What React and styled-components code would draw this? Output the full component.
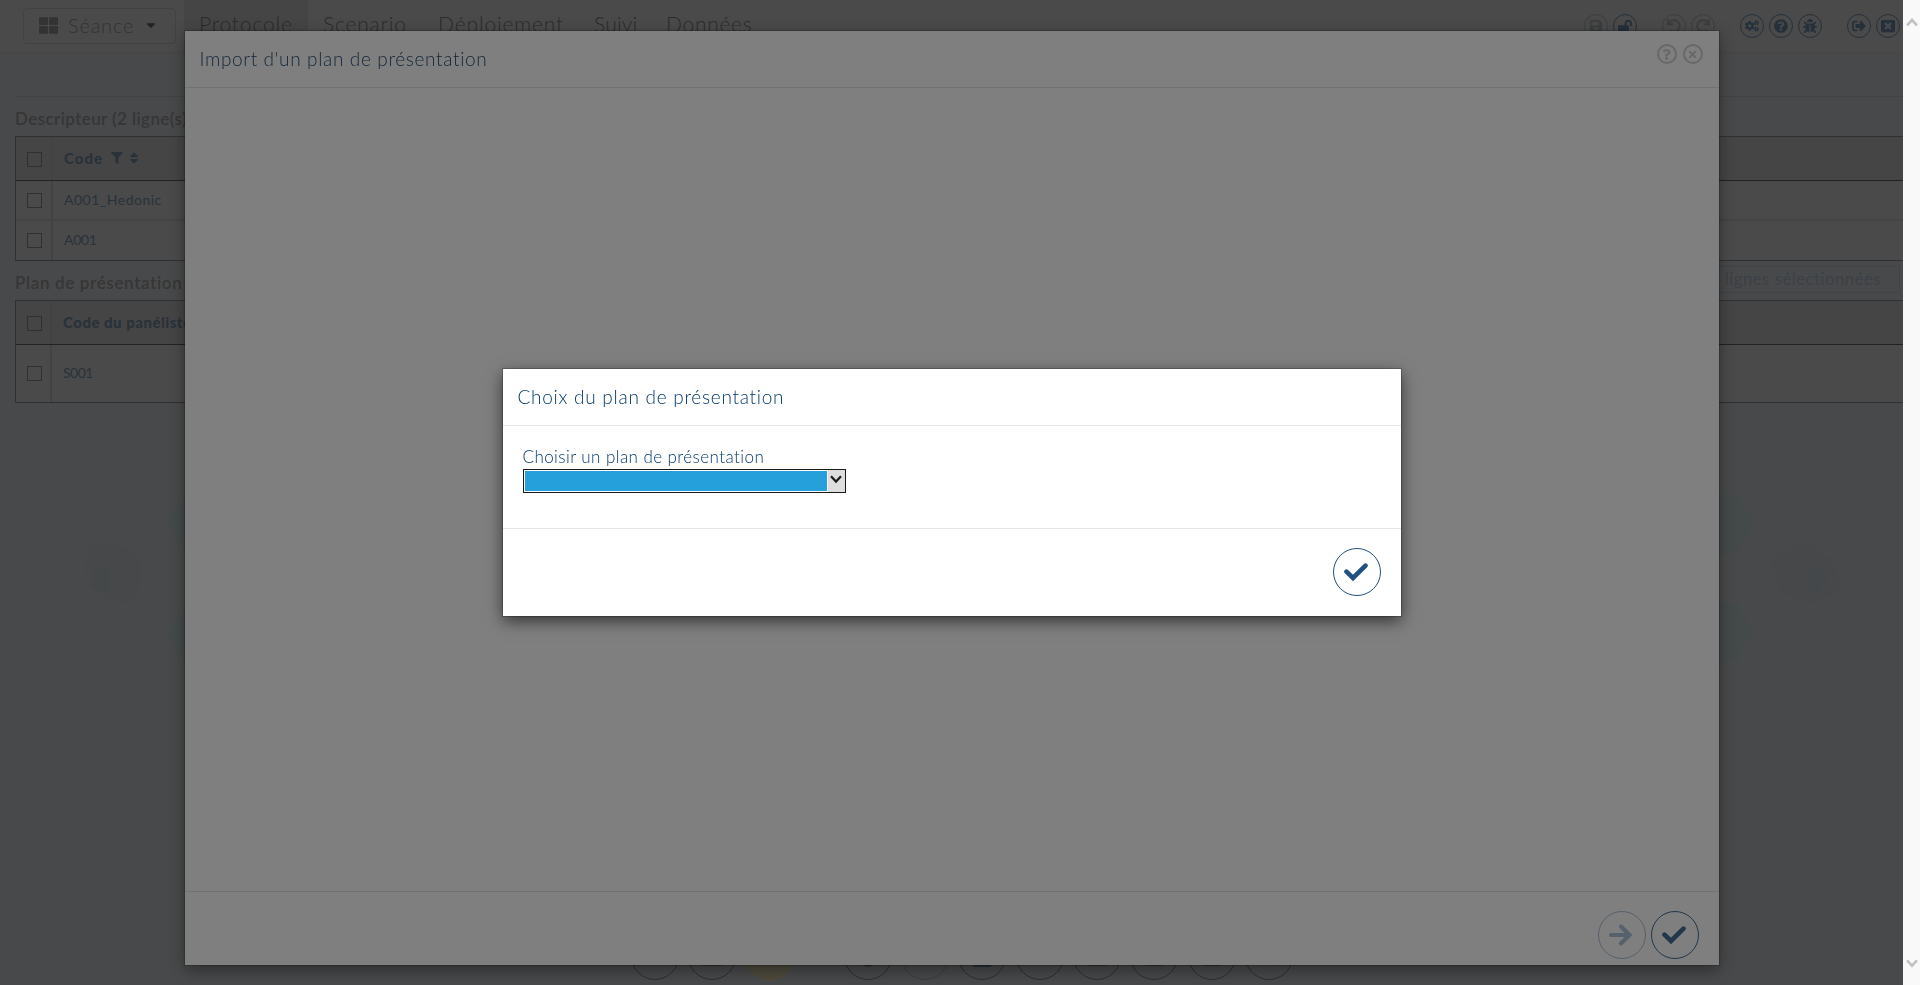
import React from "react";
import styled, { createGlobalStyle, css } from "styled-components";
import {
  FaSave, FaLockOpen, FaUndo, FaRedo, FaCogs, FaQuestionCircle, FaBug, FaSignOutAlt,
  FaWindowClose, FaThLarge, FaCaretDown, FaFilter, FaSort, FaTimes, FaQuestion,
  FaFolder, FaTable, FaList, FaCircle, FaTasks, FaCalculator, FaUsersCog, FaWindowMinimize, FaSquare, FaRandom,
} from "react-icons/fa";

const Global = createGlobalStyle`
  * { box-sizing: border-box; }
  body { margin: 0; overflow: hidden; background: #48494a;
    font-family: "Century Gothic", Lato, "Open Sans", sans-serif; }
`;

const Shell = styled.div`
  display: grid; grid-template-columns: 1fr 17px; width: 1920px; height: 985px; overflow: hidden;
`;
const Page = styled.div`
  position: relative; display: flex; flex-direction: column; min-width: 0; overflow: hidden;
  background: #48494a;
`;
const Scrollbar = styled.div`
  display: flex; flex-direction: column; justify-content: space-between; align-items: center;
  padding: 17px 0 16px; background: #f9f9f9;
  svg { display: block; }
`;
const Backdrop = styled.svg`position: absolute; left: 0; top: 0;`;

const TopBar = styled.header`
  display: flex; align-items: stretch; height: 53px; flex: none; padding: 0 3px 0 23px;
  background: #4a4a4a; border-bottom: 1px solid #464646;
`;
const SessionButton = styled.div`
  display: flex; align-items: center; width: 153px; height: 36px; margin: 8px 8px 0 0;
  padding: 0 17px 2px 15px; border: 1px solid #424242; border-radius: 4px; color: #333;
  font-size: 20px; letter-spacing: 0.8px; font-weight: 300;
  span { flex: 1; margin-left: 10px; }
  svg:last-child { color: #222; }
`;
const Tab = styled.div`
  padding: 11px 15px 0; font-size: 21px; line-height: 26px; white-space: nowrap; color: #2a2a2a;
  font-weight: 300; width: ${(p) => p.$w}px; letter-spacing: ${(p) => p.$ls}px;
  background: ${(p) => (p.$active ? "#454545" : "transparent")};
`;
const Tools = styled.div`display: flex; gap: 25px; margin: 14px 0 0 auto;`;
const ToolGroup = styled.div`display: flex; gap: 5px;`;
const Tool = styled.div`
  display: flex; align-items: center; justify-content: center; width: 24px; height: 24px;
  border: 1px solid currentColor; border-radius: 50%; color: ${(p) => (p.$off ? "#3b3d3e" : "#25303b")};
`;

const Content = styled.main`
  position: relative; flex: 1; margin: 43px 0 0 15px; border-top: 1px solid #414243;
`;
const SectionHead = styled.div`
  display: flex; justify-content: space-between; align-items: flex-start;
  height: 39px; padding: 5px 3px 0 0;
`;
const SectionTitle = styled.div`
  padding-top: 7px; font-size: 17px; font-weight: 600; line-height: 20px; color: #363636;
  letter-spacing: ${(p) => p.$ls}px; white-space: nowrap;
`;
const GhostButton = styled.div`
  height: 27px; padding: 0 18px; border: 1px solid #3f4549; color: #3b4147; font-size: 16.5px;
  line-height: 24px; letter-spacing: 0.6px; white-space: nowrap;
`;
const Table = styled.div`
  border: 1px solid #2f3031; border-right: 0; background: #4a4a4a;
`;
const Row = styled.div`
  display: grid; grid-template-columns: ${(p) => p.$first}px 1fr; height: ${(p) => p.$h}px;
  border-bottom: ${(p) => (p.$last ? "0" : "2px solid #444")};
  ${(p) => p.$head && css`background: #454545; border-bottom: 1px solid #222;`}
`;
const CheckCell = styled.div`
  border-right: 2px solid #434343; padding: ${(p) => p.$top}px 0 0 11px;
  &::before { content: ""; display: block; width: 13px; height: 13px; margin-left: -0.5px; border: 1px solid #303030; }
`;
const Cell = styled.div`
  display: flex; align-items: center; padding: 0 0 2px 11px; color: #29323b; white-space: nowrap;
  font-size: ${(p) => (p.$head ? 15 : 14)}px; letter-spacing: ${(p) => p.$ls}px;
  font-weight: ${(p) => (p.$head ? 900 : 400)};
  svg { margin-left: 4px; }
  svg:first-of-type { margin-left: 8px; }
`;

const Dock = styled.div`
  display: flex; justify-content: center; gap: 50px; height: 53px; flex: none; padding-left: 21px;
  position: relative;
`;
const DockGroup = styled.div`display: flex; gap: 9.4px;`;
const DockItem = styled.div`
  display: flex; align-items: center; justify-content: center; width: 48px; height: 48px;
  border: 1px solid ${(p) => (p.$tone === "warn" ? "#5e4a2c" : "#2b3033")}; border-radius: 50%;
  color: #2a3138; background: ${(p) => (p.$tone === "warn" ? "#4d4a3c" : "transparent")};
  opacity: ${(p) => (p.$tone === "off" ? 0.45 : 1)};
`;

const Layer = styled.div`
  position: fixed; left: 0; top: 0; width: 1903px; height: 985px;
  display: flex; align-items: flex-start; justify-content: center; padding-top: ${(p) => p.$top}px;
`;
const Dialog = styled.section`
  display: flex; flex-direction: column; width: ${(p) => p.$w}px; height: ${(p) => p.$h}px;
  background: ${(p) => (p.$dim ? "#7f7f7f" : "#fff")};
  color: ${(p) => (p.$dim ? "#22374a" : "#1f5280")};
  --rule: ${(p) => (p.$dim ? "#717171" : "#e5e5e5")};
  --ink: ${(p) => (p.$dim ? "#122639" : "#04396b")};
  box-shadow: ${(p) => (p.$dim ? "0 5px 15px rgba(0,0,0,.38), 0 0 1px 1px rgba(0,0,0,.18)" : "0 5px 15px rgba(0,0,0,.6), 0 0 0 1px rgba(0,0,0,.2)")};
`;
const DialogHead = styled.div`
  display: flex; justify-content: space-between; align-items: flex-start; height: 57px; flex: none;
  padding: 13px 16px 0 15px; border-bottom: 1px solid var(--rule);
`;
const DialogTitle = styled.div`
  padding-top: 1px; font-size: 19px; line-height: 27px; font-weight: 300; color: var(--ink);
  letter-spacing: ${(p) => p.$ls}px; white-space: nowrap;
`;
const HeadIcons = styled.div`display: flex; gap: 6px;`;
const HeadIcon = styled.div`
  display: flex; align-items: center; justify-content: center; width: 20px; height: 20px;
  border: 2px solid #686868; border-radius: 50%; color: #686868;
`;
const DialogBody = styled.div`flex: 1; padding: 19px 20px;`;
const DialogFoot = styled.div`
  display: flex; justify-content: flex-end; gap: 5px; height: ${(p) => p.$h}px; flex: none;
  padding: 19px 20px 0; border-top: 1px solid var(--rule);
`;
const RoundButton = styled.div`
  display: flex; align-items: center; justify-content: center; width: 48px; height: 48px;
  border: 1px solid currentColor; border-radius: 50%; ${(p) => p.$off && "color: #55616c;"}
  svg { margin: 0 2px 1px 0; }
`;
const Label = styled.div`
  height: 24px; font-size: 17px; line-height: 23px; font-weight: 300; letter-spacing: 0.43px;
  color: var(--ink); white-space: nowrap;
`;
const Select = styled.div`
  display: flex; width: 323px; height: 24px; border: 1px solid #1a1a1a; background: #fff;
`;
const SelectValue = styled.div`flex: 1; margin: 1px; background: #26a0da;`;
const SelectArrow = styled.div`
  display: flex; align-items: center; justify-content: center; width: 17px; background: #dedede; padding-bottom: 3px;
`;

const Check = () => (
  <svg width="24" height="20" viewBox="0 0 24 20">
    <path d="M2.5 9.7 L9 16 L21.5 3.6" fill="none" stroke="currentColor" strokeWidth="4.6" strokeLinecap="round" />
  </svg>
);
const Arrow = () => (
  <svg width="24" height="22" viewBox="0 0 24 22">
    <path d="M2 11 H20 M12 2.5 L20.5 11 L12 19.5" fill="none" stroke="currentColor" strokeWidth="4" strokeLinecap="round" />
  </svg>
);
const Chevron = ({ up, w = 12, color = "#c1c1c1", weight = 2.6 }) => (
  <svg width={w} height={w * 0.8} viewBox="0 0 12 9.6">
    <path d={up ? "M1 8.3 L6 3 L11 8.3" : "M1 1.3 L6 6.6 L11 1.3"} fill="none" stroke={color} strokeWidth={weight} />
  </svg>
);

const toolGroups = [
  [[FaSave, true], [FaLockOpen, false]],
  [[FaUndo, true], [FaRedo, true]],
  [[FaCogs], [FaQuestionCircle], [FaBug]],
  [[FaSignOutAlt], [FaWindowClose]],
];
const dockGroups = [
  [[FaFolder], [FaTable], [FaList, "warn"]],
  [[FaCircle], [FaTasks, "off"], [FaCalculator], [FaUsersCog], [FaWindowMinimize], [FaSquare], [FaSquare], [FaRandom]],
];
const tabs = [
  ["Protocole", 124, 0.85, true], ["Scenario", 115, 0.8], ["Déploiement", 156, 0.85], ["Suivi", 72, 0.2], ["Données", 120, 0.7],
];

export default function App() {
  return (
    <>
      <Global />
      <Shell>
        <Page>
          <Backdrop width="1903" height="985">
            <g fill="#44494a">
              <path d="M88 548 L110 543 L132 550 L142 565 L140 588 L128 603 L108 600 L90 588 L84 572Z" opacity=".4" />
              <path d="M92 570 L102 565 L110 575 L108 592 L94 590Z" opacity=".6" />
              <path d="M167 522 L185 498 V548Z M167 635 L185 610 V660Z" />
              <path d="M1719 494 H1738 L1753 522 L1740 549 L1719 556Z M1719 604 H1738 L1752 632 L1738 658 L1719 665Z" />
              <path d="M1772 562 L1800 540 L1832 560 L1841 590 L1810 604 L1780 592Z" opacity=".4" />
              <path d="M1808 576 L1820 566 L1829 576 L1818 592 L1808 590Z" opacity=".7" />
            </g>
          </Backdrop>
          <TopBar>
            <SessionButton>
              <FaThLarge size={19} />
              <span>Séance</span>
              <FaCaretDown size={14} />
            </SessionButton>
            {tabs.map(([t, w, ls, active]) => <Tab key={t} $w={w} $ls={ls} $active={active}>{t}</Tab>)}
            <Tools>
              {toolGroups.map((g, i) => (
                <ToolGroup key={i}>
                  {g.map(([Icon, off], j) => <Tool key={j} $off={off}><Icon size={14} /></Tool>)}
                </ToolGroup>
              ))}
            </Tools>
          </TopBar>
          <Content>
            <SectionHead><SectionTitle $ls={0.4}>Descripteur (2 ligne(s))</SectionTitle></SectionHead>
            <Table>
              <Row $first={37} $h={44} $head><CheckCell $top={15} /><Cell $head $ls={1}>Code<FaFilter size={12} /><FaSort size={14} /></Cell></Row>
              <Row $first={37} $h={40}><CheckCell $top={12} /><Cell $ls={0.5}>A001_Hedonic</Cell></Row>
              <Row $first={37} $h={39} $last><CheckCell $top={12} /><Cell $ls={-0.3}>A001</Cell></Row>
            </Table>
            <SectionHead>
              <SectionTitle $ls={0.65}>Plan de présentation</SectionTitle>
              <GhostButton>Supprimer les lignes sélectionnées</GhostButton>
            </SectionHead>
            <Table>
              <Row $first={36} $h={44} $head><CheckCell $top={15} /><Cell $head $ls={0.5}>Code du panéliste</Cell></Row>
              <Row $first={36} $h={57} $last><CheckCell $top={21} /><Cell $ls={-0.5}>S001</Cell></Row>
            </Table>
          </Content>
          <Dock>
            {dockGroups.map((g, i) => (
              <DockGroup key={i}>
                {g.map(([Icon, tone], j) => <DockItem key={j} $tone={tone}><Icon size={22} /></DockItem>)}
              </DockGroup>
            ))}
          </Dock>
        </Page>
        <Scrollbar><Chevron up /><Chevron /></Scrollbar>
      </Shell>

      <Layer $top={31}>
        <Dialog $dim $w={1534} $h={934}>
          <DialogHead>
            <DialogTitle $ls={0.65}>Import d'un plan de présentation</DialogTitle>
            <HeadIcons>
              <HeadIcon><FaQuestion size={11} /></HeadIcon>
              <HeadIcon><FaTimes size={11} /></HeadIcon>
            </HeadIcons>
          </DialogHead>
          <DialogBody />
          <DialogFoot $h={74}>
            <RoundButton $off><Arrow /></RoundButton>
            <RoundButton><Check /></RoundButton>
          </DialogFoot>
        </Dialog>
      </Layer>

      <Layer $top={369}>
        <Dialog $w={898} $h={247}>
          <DialogHead><DialogTitle $ls={0.73}>Choix du plan de présentation</DialogTitle></DialogHead>
          <DialogBody>
            <Label>Choisir un plan de présentation</Label>
            <Select>
              <SelectValue />
              <SelectArrow><Chevron color="#1a1a1a" weight={2.2} /></SelectArrow>
            </Select>
          </DialogBody>
          <DialogFoot $h={88}><RoundButton><Check /></RoundButton></DialogFoot>
        </Dialog>
      </Layer>
    </>
  );
}
